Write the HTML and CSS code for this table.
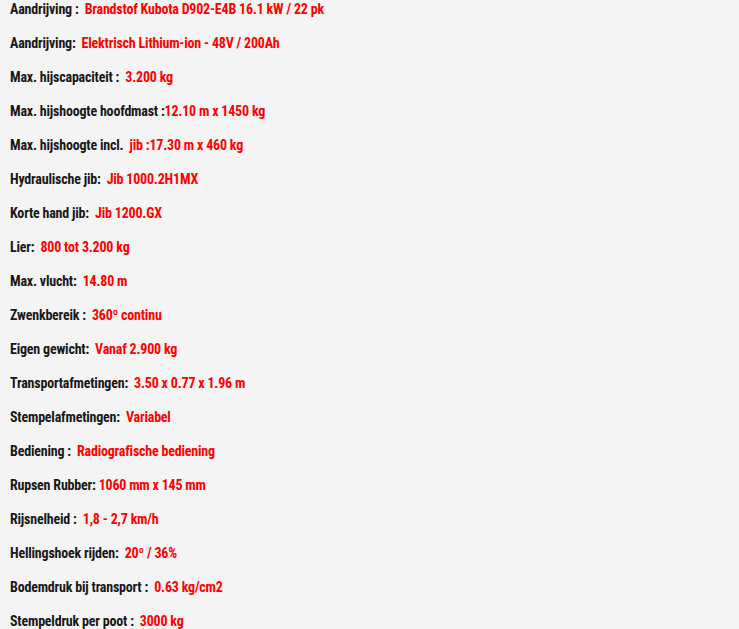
FILE: index.html
```html
<!DOCTYPE html>
<html lang="nl">
<head>
    <meta charset="UTF-8">
    <title>Specificaties</title>
    <link rel="stylesheet" href="styles.css">
</head>
<body>
    <div class="specs">
        <p class="spec">Aandrijving :&nbsp; <span class="value">Brandstof Kubota D902-E4B 16.1 kW / 22 pk</span></p>
        <p class="spec">Aandrijving:&nbsp; <span class="value">Elektrisch Lithium-ion - 48V / 200Ah</span></p>
        <p class="spec">Max. hijscapaciteit :&nbsp; <span class="value">3.200 kg</span></p>
        <p class="spec">Max. hijshoogte hoofdmast :<span class="value">12.10 m x 1450 kg</span></p>
        <p class="spec">Max. hijshoogte incl.&nbsp; <span class="value">jib :17.30 m x 460 kg</span></p>
        <p class="spec">Hydraulische jib:&nbsp; <span class="value">Jib 1000.2H1MX</span></p>
        <p class="spec">Korte hand jib:&nbsp; <span class="value">Jib 1200.GX</span></p>
        <p class="spec">Lier:&nbsp; <span class="value">800 tot 3.200 kg</span></p>
        <p class="spec">Max. vlucht:&nbsp; <span class="value">14.80 m</span></p>
        <p class="spec">Zwenkbereik :&nbsp; <span class="value">360º continu</span></p>
        <p class="spec">Eigen gewicht:&nbsp; <span class="value">Vanaf 2.900 kg</span></p>
        <p class="spec">Transportafmetingen:&nbsp; <span class="value">3.50 x 0.77 x 1.96 m</span></p>
        <p class="spec">Stempelafmetingen:&nbsp; <span class="value">Variabel</span></p>
        <p class="spec">Bediening :&nbsp; <span class="value">Radiografische bediening</span></p>
        <p class="spec">Rupsen Rubber: <span class="value">1060 mm x 145 mm</span></p>
        <p class="spec">Rijsnelheid :&nbsp; <span class="value">1,8 - 2,7 km/h</span></p>
        <p class="spec">Hellingshoek rijden:&nbsp; <span class="value">20º / 36%</span></p>
        <p class="spec">Bodemdruk bij transport :&nbsp; <span class="value">0.63 kg/cm2</span></p>
        <p class="spec">Stempeldruk per poot :&nbsp; <span class="value">3000 kg</span></p>
    </div>
</body>
</html>
```
FILE: styles.css
```css
body {
    margin: 0;
    background-color: #f4f4f4;
    font-family: "Roboto Condensed", "Open Sans", sans-serif;
}

.specs {
    padding: 0 10px;
}

.spec {
    margin: 0 0 15px;
    font-size: 14px;
    line-height: 19px;
    font-weight: bold;
    letter-spacing: -0.2px;
    color: #181818;
}

.value {
    color: #ff0000;
}
```
